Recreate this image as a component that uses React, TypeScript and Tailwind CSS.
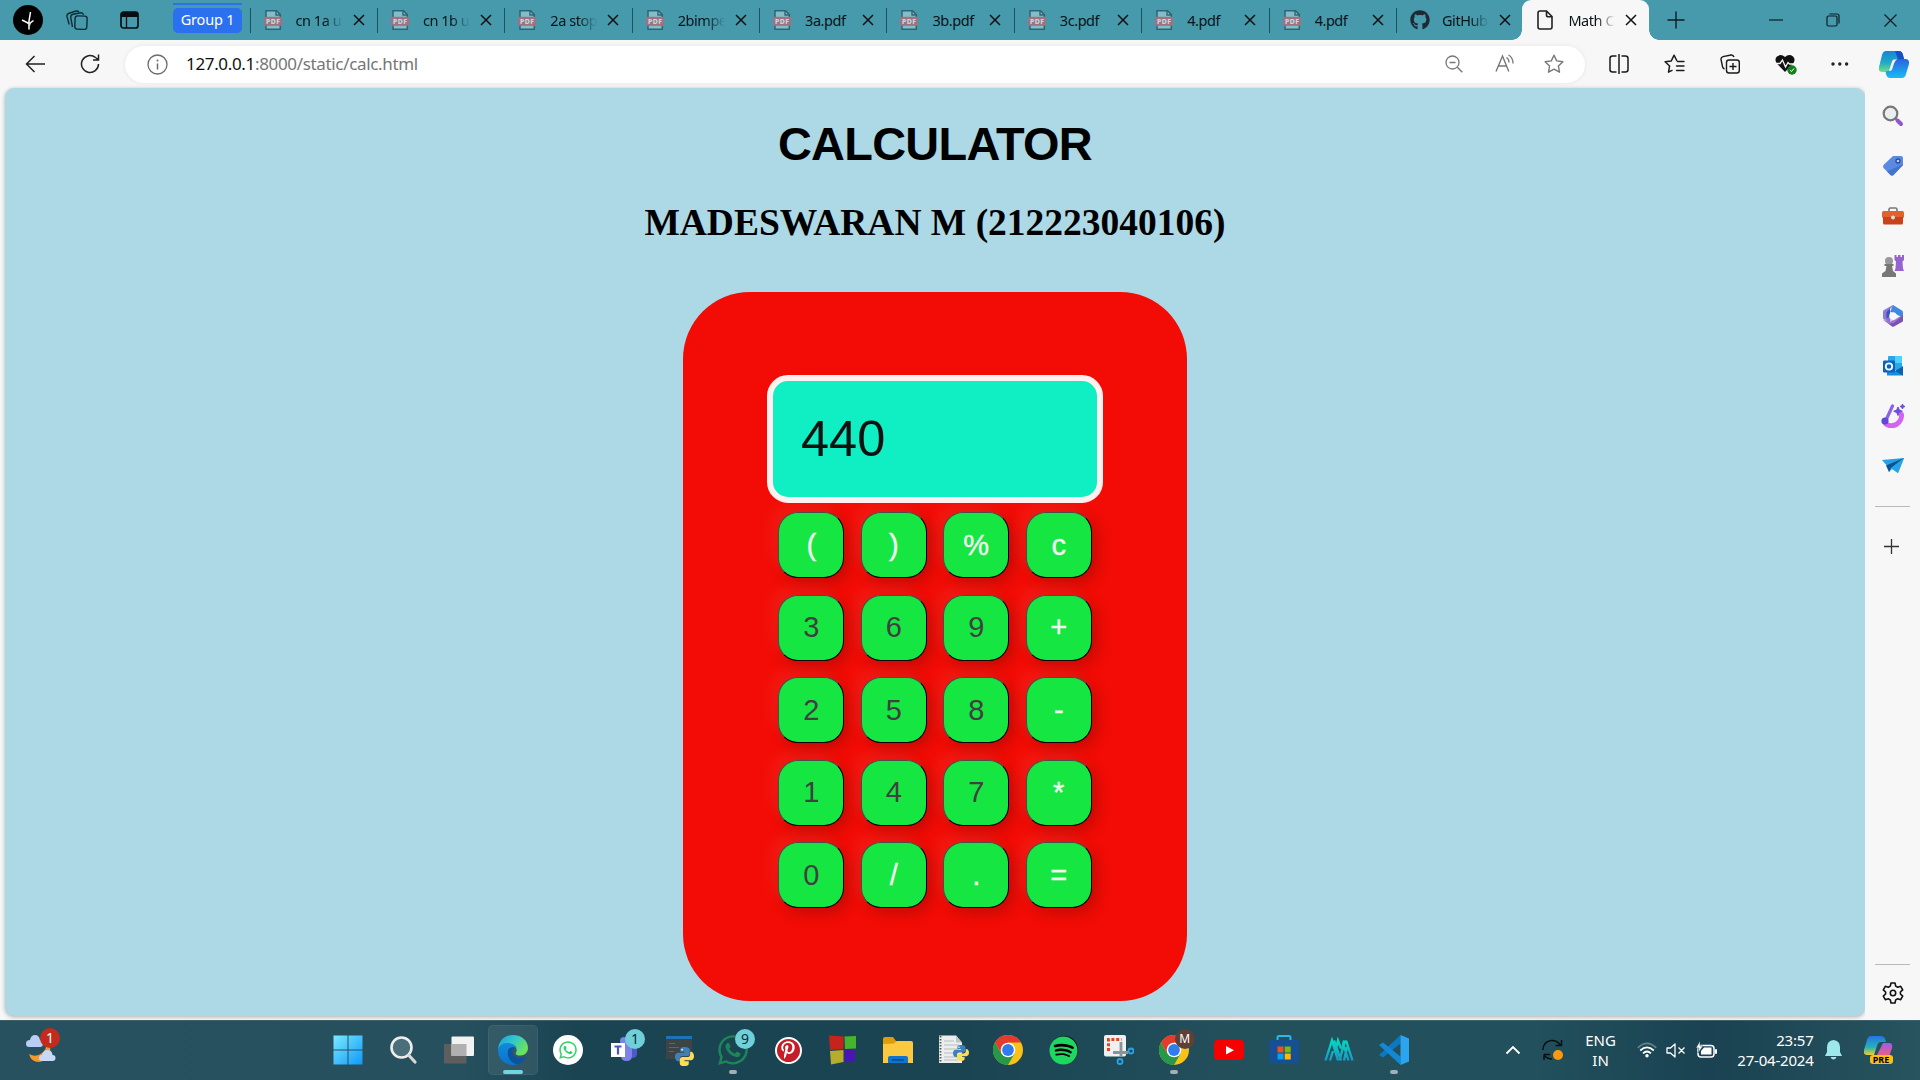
import React from "react";
import { FaGithub, FaWhatsapp, FaPinterestP, FaSpotify } from "react-icons/fa";

type P = { children?: React.ReactNode };

const Svg = ({ w, h, vb, className = "", children }: P & { w: number; h: number; vb?: string; className?: string }) => (
  <svg width={w} height={h} viewBox={vb ?? `0 0 ${w} ${h}`} fill="none" className={`shrink-0 ${className}`}>
    {children}
  </svg>
);

/* ---------- Tab strip ---------- */

const PdfIcon = () => (
  <Svg w={18} h={20}>
    <path d="M2 .8h10.5L16.3 4.6V19.2H2z" fill="#86bcc8" stroke="#2c6674" strokeWidth="1.5" />
    <path d="M12 1v4h4.5" stroke="#2c6674" strokeWidth="1.4" />
    <rect x="0" y="6.8" width="18" height="9" fill="#a0727f" />
    <text x="9" y="14" textAnchor="middle" fontSize="7" fontWeight="800" fontFamily="Noto Sans, sans-serif" fill="#b9dbe2" textLength="14">PDF</text>
  </Svg>
);

const CloseX = () => (
  <Svg w={12} h={12}>
    <path d="M1 1l10 10M11 1L1 11" stroke="#111" strokeWidth="1.5" />
  </Svg>
);

const tabs = [
  { label: "cn 1a u", fade: true },
  { label: "cn 1b u", fade: true },
  { label: "2a stop", fade: true },
  { label: "2bimpe", fade: true },
  { label: "3a.pdf" },
  { label: "3b.pdf" },
  { label: "3c.pdf" },
  { label: "4.pdf" },
  { label: "4.pdf" },
  { label: "GitHub", fade: true, git: true },
];

const Label = ({ text, fade }: { text: string; fade?: boolean }) => (
  <span
    className={`w-[47px] overflow-hidden whitespace-nowrap text-[14.5px] leading-5 tracking-[-0.45px] text-[#0a1417] ${
      fade ? "[mask-image:linear-gradient(90deg,#000_60%,transparent_100%)]" : ""
    }`}
  >
    {text}
  </span>
);

const TabStrip = () => (
  <div className="flex h-10 items-center bg-[#469aac]">
    <div className="ml-[13px] flex size-[30px] shrink-0 items-center justify-center rounded-full bg-black">
      <Svg w={14} h={20}>
        <path d="M8 19.500V11M8 13.500L1 10M8 14L12.500 10.500M8 11L9.500 2" stroke="#fff" strokeWidth="1.500" />
        <path d="M3 10.500l5 3 3-3-2 5.500z" fill="#ddd" />
      </Svg>
    </div>
    <Svg w={22} h={20} className="ml-[23px]">
      <rect x="9" y="6" width="12" height="13.300" rx="2.500" transform="rotate(2 15 12)" stroke="#0d2c34" strokeWidth="1.400" />
      <path d="M6.500 17L4.700 7.500Q4.500 5 6.800 4.300L15 2.800q2-.200 2.500 2" stroke="#0d2c34" strokeWidth="1.400" />
      <path d="M3.200 14.500L1 6.500Q.5 4.500 2.500 3.500L10 1q2-.300 3 1" stroke="#0d2c34" strokeWidth="1.400" />
    </Svg>
    <Svg w={19} h={18} className="ml-8">
      <rect x="1" y="1" width="17" height="16" rx="2.500" stroke="#050f12" strokeWidth="1.700" />
      <path d="M1 2.500Q1 1 3 1h13q2 0 2 2v3H1z" fill="#050f12" />
      <path d="M6.500 5v12" stroke="#050f12" strokeWidth="1.300" />
    </Svg>
    <div className="ml-[34px] flex w-[69px] shrink-0 flex-col gap-[3px] self-start pt-[3px]">
      <div className="h-0.5 bg-[#2b70ee]" />
      <div className="flex h-[24.500px] items-center justify-center whitespace-nowrap rounded-[5px] bg-[#2b70ee] text-[14.500px] tracking-[-0.200px] text-white">Group 1</div>
    </div>
    <div className="ml-[7.500px] flex">
      {tabs.map((t, i) => (
        <div key={i} className="flex w-[127.400px] items-center">
          <div className="h-[25px] w-px bg-[#1d5361]" />
          <div className="ml-[13px] flex w-5 items-center">{t.git ? <FaGithub size={20} color="#1c2a33" /> : <PdfIcon />}</div>
          <div className="ml-3 flex"><Label text={t.label} fade={t.fade} /></div>
          <div className="ml-2.5"><CloseX /></div>
        </div>
      ))}
    </div>
    <div className="relative -ml-px flex h-10 w-[127px] shrink-0 items-center rounded-t-[9px] bg-[#f7f7f7]">
      <div className="absolute -left-2.5 bottom-0 size-2.5 bg-[radial-gradient(circle_at_0_0,transparent_9.500px,#f7f7f7_10px)]" />
      <div className="absolute -right-2.5 bottom-0 size-2.5 bg-[radial-gradient(circle_at_100%_0,transparent_9.500px,#f7f7f7_10px)]" />
      <Svg w={16} h={20} className="ml-[15px]">
        <path d="M3 1h6.500L15 6.500V17q0 2-2 2H3q-2 0-2-2V3q0-2 2-2zM9.500 1v4q0 1.800 1.800 1.800H15" stroke="#222" strokeWidth="1.600" />
      </Svg>
      <div className="ml-[15px] flex"><Label text="Math C" fade /></div>
      <div className="ml-2.5"><CloseX /></div>
    </div>
    <Svg w={18} h={18} className="ml-[18px]"><path d="M9 .5v17M.5 9h17" stroke="#0b1e24" strokeWidth="1.400" /></Svg>
    <Svg w={14} h={2} className="ml-[84px]"><path d="M0 1h14" stroke="#0b1e24" strokeWidth="1.200" /></Svg>
    <Svg w={14} h={14} className="ml-[43px]">
      <rect x="1" y="3" width="10" height="10" rx="1.500" stroke="#0b1e24" strokeWidth="1.200" />
      <path d="M3.500 1H11q2 0 2 2v7.500" stroke="#0b1e24" strokeWidth="1.200" />
    </Svg>
    <Svg w={13} h={13} className="ml-11"><path d="M.5.5l12 12M12.500.5l-12 12" stroke="#0b1e24" strokeWidth="1.200" /></Svg>
  </div>
);

/* ---------- Toolbar ---------- */

const starPath = "M10 1.200l2.700 5.700 6.200.8-4.500 4.300 1.100 6.200L10 15.200l-5.500 3 1.100-6.200L1.100 7.700l6.200-.8z";

const CopilotMark = () => (
  <Svg w={30} h={27}>
    <defs>
      <linearGradient id="cpA" x1="0" y1="0" x2="0" y2="1"><stop offset="0" stopColor="#1686d8" /><stop offset=".55" stopColor="#22a9c4" /><stop offset="1" stopColor="#6fe08b" /></linearGradient>
      <linearGradient id="cpB" x1="0" y1="0" x2="0" y2="1"><stop offset="0" stopColor="#2b63e0" /><stop offset="1" stopColor="#17bdf5" /></linearGradient>
    </defs>
    <path d="M7 0h13q3 0 4 4l1 4h-6q-3 0-4 3l-3 8q-1 2-4 2H3q-4 0-3-5L3 4q1-4 4-4z" fill="url(#cpA)" />
    <path d="M23 27H11q-3 0-4-4l-.5-3q3 1 5-2l3-8q1-2 4-2h8q4 0 3.500 5l-3 10q-1 4-4 4z" fill="url(#cpB)" />
    <path d="M14.500 8.500h3.500q-2 1-3 4l-2 6q-.7 1.500-3 1.500l2.500-8q.7-3 2-3.500z" fill="#f7f7f7" />
    <path d="M16 0h4q3 0 4 4l1 4h-6z" fill="#174fc4" />
  </Svg>
);

const Toolbar = () => (
  <div className="flex h-12 items-center bg-[#f7f7f7]">
    <Svg w={20} h={18} className="ml-[25px]"><path d="M20 9H1.500M9.500 1L1.500 9l8 8" stroke="#222" strokeWidth="1.500" /></Svg>
    <Svg w={20} h={20} className="ml-[35px]">
      <path d="M18.500 10a8.500 8.500 0 1 1-3-6.500L18 5.500M18.500 0.500V6h-5.500" stroke="#222" strokeWidth="1.500" />
    </Svg>
    <div className="ml-[25px] flex h-[37px] w-[1460px] shrink-0 items-center rounded-full bg-white shadow-[0_0_4px_rgba(0,0,0,0.08)]">
      <Svg w={21} h={21} className="ml-[22px]">
        <circle cx="10.500" cy="10.500" r="9.500" stroke="#6b6b6b" strokeWidth="1.300" />
        <path d="M10.500 9.500v6" stroke="#6b6b6b" strokeWidth="1.500" /><circle cx="10.500" cy="6.400" r="1" fill="#6b6b6b" />
      </Svg>
      <div className="ml-[18px] w-[400px] whitespace-nowrap text-[17px] tracking-[-0.340px] text-[#767676]"><span className="text-[#111]">127.0.0.1</span>:8000/static/calc.html</div>
      <Svg w={18} h={18} className="ml-auto"><circle cx="7.500" cy="7.500" r="6.500" stroke="#777" strokeWidth="1.300" /><path d="M4.500 7.500h6M12.300 12.300l5 5" stroke="#777" strokeWidth="1.400" /></Svg>
      <Svg w={20} h={20} className="ml-8">
        <path d="M1 17.500L7.500 2l6.300 15.500M3.500 12h8" stroke="#777" strokeWidth="1.400" />
        <path d="M11.500 3.500q2.500 1.500 2.500 5M13.500 1q4.500 2.500 4.500 8.500" stroke="#777" strokeWidth="1.300" />
      </Svg>
      <Svg w={20} h={20} className="ml-[29px] mr-[21px]"><path d={starPath} stroke="#777" strokeWidth="1.400" strokeLinejoin="round" /></Svg>
    </div>
    <Svg w={20} h={20} className="ml-[24px]">
      <path d="M7.500 2H3.500Q1 2 1 4.500v11Q1 18 3.500 18h4M12.500 2h4Q19 2 19 4.500v11q0 2.500-2.500 2.500h-4M10 0v20" stroke="#1a1a1a" strokeWidth="1.500" />
    </Svg>
    <Svg w={21} h={20} className="ml-[35px]">
      <path d="M13 7L10 1.200 7.300 6.900l-6.200.8 4.500 4.300-1.100 6.200 4-2" stroke="#1a1a1a" strokeWidth="1.500" strokeLinejoin="round" />
      <path d="M13.500 7.500H20M12.500 12H20M12.500 16.500H20" stroke="#1a1a1a" strokeWidth="1.400" strokeLinecap="round" />
    </Svg>
    <Svg w={20} h={20} className="ml-[35px]">
      <rect x="6.500" y="6" width="12.800" height="13" rx="2.500" stroke="#1a1a1a" strokeWidth="1.400" />
      <path d="M13 9v7M9.500 12.500h7M4.500 15Q3 14.500 2.500 12.500L1 5.500Q.8 3.300 3 2.600L11 1q2.200-.3 3 2" stroke="#1a1a1a" strokeWidth="1.400" />
    </Svg>
    <Svg w={22} h={21} className="ml-[35px]">
      <path d="M10 18L1.800 9.500Q-1 5.500 2 2.500 6-.5 10 3q4-3.500 8-.5 3 3 .2 7z" fill="#111" />
      <path d="M0 9.500h5L7.500 6l3 7L13 8.500l1.500 1.500H20" stroke="#f7f7f7" strokeWidth="1.300" />
      <circle cx="17" cy="16" r="4.700" fill="#13801c" /><path d="M15 16l1.500 1.500 2.500-3" stroke="#fff" />
    </Svg>
    <Svg w={18} h={4} className="ml-[34px]"><circle cx="2" cy="2" r="1.700" fill="#222" /><circle cx="8.800" cy="2" r="1.700" fill="#222" /><circle cx="15.600" cy="2" r="1.700" fill="#222" /></Svg>
    <div className="ml-[30px]"><CopilotMark /></div>
  </div>
);

/* ---------- Page ---------- */

const keys = ["(", ")", "%", "c", "3", "6", "9", "+", "2", "5", "8", "-", "1", "4", "7", "*", "0", "/", ".", "="];

const CalculatorPage = () => (
  <main className="ml-[5px] flex h-[928px] w-[1860px] shrink-0 flex-col items-center rounded-[9px] bg-[#add8e6] shadow-[0_1px_4px_rgba(0,0,0,0.3)]">
    <h1 className="mt-[29px] font-['Liberation_Sans',Arial,sans-serif] text-[46.875px] font-bold leading-[54px] tracking-[-0.700px] text-black">CALCULATOR</h1>
    <h2 className="mt-[31px] font-['Liberation_Serif',serif] text-[37.500px] font-bold leading-[42px] text-black">MADESWARAN M (212223040106)</h2>
    <section className="mt-[48px] flex h-[709px] w-[504px] flex-col items-center rounded-[67px] bg-[#f20c05] pt-[83px] font-['Liberation_Sans',Arial,sans-serif]">
      <div className="flex h-[128px] w-[336px] items-center rounded-[21px] border-[6px] border-[#fff0f0] bg-[#10efc4] pl-7 text-[50.500px] text-[#111]">440</div>
      <div className="mt-[9px] grid grid-cols-[repeat(4,66px)] gap-[16.500px]">
        {keys.map((k) => (
          <button
            key={k}
            className={`flex size-[66px] items-center justify-center rounded-[20px] border border-t-[#4c4c4c] border-l-[#4c4c4c] border-r-black border-b-black bg-[#16e642] text-[29px] leading-none shadow-[-7px_-7px_15px_rgba(255,255,255,0.07),5px_5px_15px_rgba(0,0,0,0.2)] ${
              /\d/.test(k) ? "text-[#404040]" : "text-[#f1f5f1] [-webkit-text-stroke:0.4px_#f1f5f1]"
            }`}
          >
            {k}
          </button>
        ))}
      </div>
    </section>
  </main>
);

/* ---------- Sidebar ---------- */

const sideIcons = [
  <Svg w={22} h={22} key="s"><circle cx="8.500" cy="8.500" r="6.800" stroke="#777" strokeWidth="2.200" fill="#e9eef2" /><path d="M13.500 13.500l2 2" stroke="#777" strokeWidth="2" /><path d="M15.500 15.500l3.500 3.500" stroke="#9156cf" strokeWidth="4" strokeLinecap="round" /></Svg>,
  <Svg w={22} h={22} key="t"><path d="M11 1h8q2 0 2 2v7L11.500 20q-1.500 1-3 0L1.500 13q-1-1.500 0-3z" fill="#5b8be0" /><path d="M21 9v1l-9.500 10q-1.500 1-3 0L5 16.500z" fill="#4573d0" /><circle cx="16" cy="6" r="2" fill="#b7cff5" stroke="#2a4b9c" strokeWidth="1.300" /></Svg>,
  <Svg w={22} h={22} key="b"><path d="M7 7V4.500Q7 3 8.500 3h5Q15 3 15 4.500V7" stroke="#777" strokeWidth="1.600" /><rect x="0" y="6" width="22" height="7" rx="1.500" fill="#e2622d" /><path d="M1 12h20v6q0 1.500-1.500 1.500h-17Q1 19.500 1 18z" fill="#c8421a" /><circle cx="11" cy="12.500" r="2" fill="#ddd" /></Svg>,
  <Svg w={22} h={22} key="g"><path d="M12.500 0h2v2H16V0h2.500v2H20V0h2v5l-1.500 1.500.5 7 1 2.500h-9.500l1-2.500.5-7L12.500 5z" fill="#9663cf" /><circle cx="7" cy="6" r="4" fill="#999" /><path d="M2.500 9h9v2H10l1 5 3 2.500V22H0v-3.500L3.500 16l1-5h-2z" fill="#777" /></Svg>,
  <Svg w={22} h={22} key="m"><path d="M11 0l9 5.500q1 .5 1 2V13L13 8.500 8 7z" fill="#3f8ae0" /><path d="M10 .5Q11 0 12 .5L8 4v12l-6-1.500Q1 14 1 13V6.500Q1 5.500 2 5z" fill="#8f7ad8" /><path d="M8 3.500L4.500 7v9L8 17.500z" fill="#3a55b5" /><path d="M1.500 15L8 17l5.500-2.500L21 10v5.500q0 1-1 1.500l-8 4.500q-1 .5-2 0z" fill="#7a52b0" /><path d="M1.500 15L9 11l1 4 11-5-9 8-5 1z" fill="#b488e0" opacity=".6" /><circle cx="11" cy="11" r="3.800" fill="#f7f7f7" /></Svg>,
  <Svg w={22} h={22} key="o"><rect x="6" y="1" width="14" height="14" rx="1" fill="#28a8ea" /><path d="M13 1h7v7h-7z" fill="#50d0ff" /><path d="M5 11l8 5 8-5v9.500H5z" fill="#168fdb" /><path d="M13 16l8-4.500v9z" fill="#0b60b0" /><rect x="1" y="5.500" width="12" height="12" rx="1.200" fill="#0a63c0" /><circle cx="7" cy="11.500" r="3.200" stroke="#fff" strokeWidth="1.800" /></Svg>,
  <Svg w={24} h={24} key="d"><path d="M5 20q5 3.500 11 0 5-4 4.500-9.500" stroke="#d464f0" strokeWidth="5" strokeLinecap="round" /><path d="M5.500 15L11.500 2" stroke="#8b63e6" strokeWidth="3.200" strokeLinecap="round" /><circle cx="4" cy="17" r="3.600" fill="#6049d8" /><path d="M17 3l1.300 3 3 1.300-3 1.300L17 11.500l-1.300-3-3-1.200 3-1.300zM21.500 0l.7 1.700 1.800.8-1.800.8-.7 1.700-.7-1.700-1.800-.8 1.800-.8z" fill="#704be0" stroke="#704be0" /></Svg>,
  <Svg w={22} h={22} key="p"><path d="M0 5l22-2-6 15-6-4-3 3-1-5z" fill="#27a0e6" /><path d="M22 3L4 10.500 7 17l2-4z" fill="#0a5495" /><path d="M22 3l-6 15-7-5z" fill="#25a5e8" /></Svg>,
];

const Sidebar = () => (
  <aside className="flex w-[55px] flex-col items-center bg-[#f7f7f7] pt-[3px]">
    {sideIcons.map((ic, i) => (
      <div key={i} className="flex h-[50px] shrink-0 items-center justify-center">{ic}</div>
    ))}
    <div className="mt-[15px] h-px w-[35px] bg-[#b9b9b9]" />
    <Svg w={15} h={15} className="mt-8 -translate-x-px"><path d="M7.500 0v15M0 7.500h15" stroke="#333" strokeWidth="1.300" /></Svg>
    <div className="mt-auto h-px w-[35px] bg-[#b9b9b9]" />
    <Svg w={22} h={22} className="mb-4 mt-[17px]">
      <path d="M9 1h4l.7 3.100 2 1.100 3-.9 2 3.500L18.400 10v2l2.300 2.200-2 3.500-3-.9-2 1.100L13 21H9l-.7-3.100-2-1.100-3 .9-2-3.500L3.600 12v-2L1.300 7.800l2-3.500 3 .9 2-1.100z" stroke="#111" strokeWidth="1.600" strokeLinejoin="round" />
      <circle cx="11" cy="11" r="2.700" stroke="#111" strokeWidth="1.600" />
    </Svg>
  </aside>
);

/* ---------- Taskbar ---------- */

const Chrome = () => (
  <Svg w={30} h={30}>
    <circle cx="15" cy="15" r="15" fill="#fbc116" />
    <path d="M2 7.500a15 15 0 0 0 13 22.500l6.500-11.250L15 15l-6.500 3.750z" fill="#24994a" />
    <path d="M2 7.500L8.500 18.750 15 15V7.500h13A15 15 0 0 0 2 7.500z" fill="#e33b2e" />
    <circle cx="15" cy="15" r="7.300" fill="#fff" /><circle cx="15" cy="15" r="5.900" fill="#2f7cee" />
  </Svg>
);

const Python = ({ s = 19 }: { s?: number }) => (
  <Svg w={s} h={s} vb="0 0 20 20">
    <path d="M10 0C6 0 5.500 1.500 5.500 3v2H10v1H3.500C1 6 0 8 0 10.500S1.500 15 3.500 15H5v-2.500C5 10.500 6.500 9.500 8 9.500h5c1.500 0 2.500-1 2.500-2.500V3c0-2-2-3-5.500-3z" fill="#4080b8" />
    <path d="M10 20c4 0 4.500-1.500 4.500-3v-2H10v-1h6.500c2.500 0 3.500-2 3.500-4.500S18.500 5 16.500 5H16v2.500c0 2-1.500 3-3 3H8C6.500 10.500 5 11.500 5 13v4c0 2 1.500 3 5 3z" fill="#ffdc55" />
    <circle cx="7.500" cy="2.800" r=".9" fill="#fff" />
  </Svg>
);

const Badge = ({ children, className }: P & { className: string }) => (
  <div className={`absolute flex size-5 items-center justify-center rounded-full leading-none ${className}`}>{children}</div>
);

const Task = ({ children, active, running }: P & { active?: boolean; running?: boolean }) => (
  <div className="relative flex h-[60px] w-[55.080px] shrink-0 items-center justify-center">
    {active && <div className="absolute inset-x-[2.500px] inset-y-[5px] rounded-[5px] border border-white/5 bg-white/8" />}
    <div className="relative flex size-[30px] items-center justify-center">{children}</div>
    {active && <div className="absolute bottom-1.5 h-1 w-5 rounded-full bg-[#70d5dc]" />}
    {running && <div className="absolute bottom-1.5 h-1 w-2 rounded-full bg-[#9fb0b6]" />}
  </div>
);

const Taskbar = () => (
  <footer className="flex h-[60px] items-center bg-[linear-gradient(90deg,#27515e_0%,#26505d_24%,#1b4453_30%,#1b4453_50%,#22505b_65%,#22505c_80%,#1a4252_89%,#27545e_100%)] text-white shadow-[inset_0_1px_0_#3c6269]">
    <div className="relative ml-[25px] h-10 w-10">
      <Svg w={40} h={40}>
        <path d="M25 16q2 14-11 16Q6 32 4 24q7 4 13-1 4-3 4-7z" fill="#f59a24" />
        <path d="M4 17q-3 0-3-3.500T5 10q1-5 5-5t5 5q3 0 3 3.500T15 17z" fill="#b9cdf5" />
        <path d="M17 31q-3 0-3-3t3-3q1-5 5.500-5t5 5q3 0 3 3t-3 3z" fill="#c8d8f8" />
      </Svg>
      <Badge className="-top-[2px] left-[15px] bg-[#c42b1c] text-[14px] text-white">1</Badge>
    </div>
    <div className="ml-[255px] flex">
      <Task>
        <Svg w={30} h={30}>
          <defs><linearGradient id="win" x1="0" y1="0" x2="30" y2="30" gradientUnits="userSpaceOnUse"><stop stopColor="#7cecff" /><stop offset="1" stopColor="#0c97fa" /></linearGradient></defs>
          <path d="M.5.5h14v14H.5zM15.500.5h14v14h-14zM.5 15.500h14v14H.5zM15.500 15.500h14v14h-14z" fill="url(#win)" />
        </Svg>
      </Task>
      <Task><Svg w={30} h={30}><circle cx="13.500" cy="12.500" r="10" fill="#4a6f7a" stroke="#eee" strokeWidth="2.600" /><path d="M21 20.500l6 6.500" stroke="#d8d8d8" strokeWidth="3.200" strokeLinecap="round" /></Svg></Task>
      <Task>
        <Svg w={30} h={30} className="translate-x-px"><rect x="0" y="9" width="22.500" height="19.500" rx="1" fill="#5e5e5e" /><rect x="7.500" y="1.500" width="22.500" height="19.500" rx="1" fill="#f2f2f2" /><rect x="7.500" y="9" width="15" height="12" fill="#b0b0b0" /></Svg>
      </Task>
      <Task active>
        <Svg w={30} h={30}>
          <defs>
            <linearGradient id="eT" x1="0" y1="0" x2="1" y2=".5"><stop stopColor="#1b9fe0" /><stop offset=".5" stopColor="#2fc6cf" /><stop offset="1" stopColor="#6be35a" /></linearGradient>
            <linearGradient id="eB" x1="0" y1="0" x2="0" y2="1"><stop stopColor="#128ad8" /><stop offset="1" stopColor="#0a73cd" /></linearGradient>
          </defs>
          <path d="M0 14C1 5 7 0 15 0c9 0 15 6 15 13 0 4.500-3.500 7.500-7.500 7.500-4 0-5.500-1.500-4.500-3 2-4-1-8-6-8-6 0-10 2-12 4.500z" fill="url(#eT)" />
          <path d="M0 15c0-3.500 4-7 9.500-7 4.500 0 8 2 9 5-4.500-2.500-8 0-8 5 0 7 6 11.500 10.500 10.500-2 1-4 1.500-6 1.500C6 30 0 23.500 0 15z" fill="url(#eB)" />
          <path d="M10.500 14c-2.500 7 2 15 9.500 15 3-1 6-3 7.700-6.500-.2-.9-.9-.7-1.500-.4-5 2-10 .5-11.500-3-1-2.300-.3-4.800 1.300-6.100-2-.6-4-.2-5.500 1z" fill="#0c539f" />
        </Svg>
      </Task>
      <Task><div className="flex size-[30px] items-center justify-center rounded-full bg-white"><FaWhatsapp size={20} color="#2ad366" /></div></Task>
      <Task>
        <Svg w={30} h={30}>
          <circle cx="16" cy="6" r="4" fill="#7b83eb" />
          <path d="M20 10h9v9q0 4-5 4h-4z" fill="#5059c9" /><path d="M13 9h11v12q0 5-5.500 5T13 21z" fill="#7b83eb" />
          <rect x="3" y="8" width="14" height="14" fill="#fff" /><path d="M6.500 11.500h7M10 11.500v8" stroke="#4e56bd" strokeWidth="2.200" />
        </Svg>
        <Badge className="-right-[7px] -top-1.5 bg-[#70d0da] text-[14px] text-[#0c2c33]">1</Badge>
      </Task>
      <Task>
        <Svg w={30} h={30}><rect x="3" y="1" width="26" height="23" fill="#3d4446" /><rect x="3" y="1" width="26" height="3" fill="#1b73ba" /><path d="M6 8.500h6M6 12.500h10M6 16.500h5" stroke="#3e7b4b" strokeWidth="1.200" /></Svg>
        <div className="absolute -bottom-px -right-px"><Python s={19} /></div>
      </Task>
      <Task running>
        <FaWhatsapp size={34} color="#1d8659" className="shrink-0" />
        <Badge className="-right-[7px] -top-1.5 bg-[#70d0da] text-[14px] text-[#0c2c33]">9</Badge>
      </Task>
      <Task><div className="flex size-[27px] items-center justify-center rounded-full border-2 border-white bg-[#c41e28]"><FaPinterestP size={18} color="#fff" /></div></Task>
      <Task>
        <Svg w={30} h={30}><path d="M1 .5l14.500 1V14L2 15z" fill="#c5231c" /><path d="M16.500 1.500L28 1v12.500l-11 .5z" fill="#46b52c" /><path d="M2 16l13.500-1v12L3 29.500z" fill="#b5ad2b" /><path d="M16.500 15L27 14.500V26l-10.500 1.500z" fill="#4915b5" /></Svg>
      </Task>
      <Task>
        <Svg w={30} h={30}><path d="M0 4q0-2 2-2h8l3 4v5H0z" fill="#dd9c08" /><path d="M0 9l11-.5L13.500 6H28q2 0 2 2v20H0z" fill="#fbc93f" /><path d="M5 28v-5q0-2 2-2h16q2 0 2 2v5z" fill="#0f74cf" /><path d="M9 25h12" stroke="#0a4c94" strokeWidth="1.600" /></Svg>
      </Task>
      <Task>
        <Svg w={30} h={30}><path d="M1 .5h17l6 7V28H1z" fill="#eceeee" /><path d="M18 .5v7h6z" fill="#bfc4c4" /><path d="M2.500 1v27" stroke="#555" strokeWidth="1.800" strokeDasharray="1.500 1.500" /><path d="M6 6h10M6 10h15M6 14h15M6 18h12M6 22h14M6 25h14" stroke="#b9bdbd" /></Svg>
        <div className="absolute bottom-1 -right-px"><Python s={16} /></div>
      </Task>
      <Task><Chrome /></Task>
      <Task><div className="flex size-7 items-center justify-center rounded-full bg-black"><FaSpotify size={29} color="#1ed760" className="shrink-0" /></div></Task>
      <Task>
        <Svg w={30} h={30}><rect x="0" y="0" width="22" height="21.500" rx="2" fill="#eef0f1" /><path d="M4.500 16V4.500h13" stroke="#e0451f" strokeWidth="3" strokeDasharray="3 1.800" /><path d="M17 7v15M9 17.500h15" stroke="#8c9396" strokeWidth="2.800" /><circle cx="27" cy="16" r="2.500" stroke="#2aa3e6" strokeWidth="1.800" /><circle cx="16" cy="26.500" r="2.500" stroke="#2aa3e6" strokeWidth="1.800" /></Svg>
      </Task>
      <Task running>
        <Chrome />
        <Badge className="-right-[6px] -top-1.5 bg-[#5d4037] text-[12px] text-white">M</Badge>
      </Task>
      <Task><Svg w={30} h={30}><rect x="0" y="5" width="30" height="20" rx="4" fill="#f60000" /><path d="M12 11l8 4.300-8 4.300z" fill="#fff" /></Svg></Task>
      <Task>
        <Svg w={30} h={30}><path d="M8.500 6V2.500Q8.500 1 10 1h10q1.500 0 1.500 1.500V6" stroke="#29b8ee" strokeWidth="2" /><path d="M0 5h30v20q0 4-4 4H4q-4 0-4-4z" fill="#164f92" /><path d="M8.500 11.500h6v6h-6z" fill="#f25022" /><path d="M15.700 11.500h6v6h-6z" fill="#7fba00" /><path d="M8.500 18.500h6v6h-6z" fill="#00a4ef" /><path d="M15.700 18.500h6v6h-6z" fill="#ffb900" /></Svg>
      </Task>
      <Task>
        <Svg w={30} h={30}>
          <defs><linearGradient id="mm" x1="0" y1="4" x2="0" y2="26" gradientUnits="userSpaceOnUse"><stop stopColor="#00dfc0" /><stop offset="1" stopColor="#1d93c4" /></linearGradient></defs>
          <path d="M1.500 25.500L8 5.500l6 20M6 25.500L9 16M10 5.500l7 20M15.500 25.500L21 5.500M12 14L14 5.500l3 8M18 16L20 5.500M20 25.500L23 12M22 5.500l6.500 20M19.500 10l5 15.500" stroke="url(#mm)" strokeWidth="2.400" />
        </Svg>
      </Task>
      <Task running>
        <Svg w={30} h={30}><path d="M21.500 0v8.500L4 22.500 0 20 21.500 0z" fill="#0b78c4" /><path d="M21.500 30v-8.500L4 7.500 0 10l21.500 20z" fill="#1389d6" /><path d="M21.500 0L30 3.500v23L21.500 30z" fill="#2ca5f0" /></Svg>
      </Task>
    </div>
    <Svg w={16} h={10} className="ml-[83px]"><path d="M1.500 8.500L8 2l6.500 6.500" stroke="#fff" strokeWidth="1.900" /></Svg>
    <Svg w={22} h={22} className="ml-[21px]">
      <path d="M1 11Q1 3 9 1.500q6-.5 10 5M19.500 1v5.500h-6M2 15.500h6M2 15.500V21M2 16q3 4 8 4" stroke="#0a0f10" strokeWidth="1.400" />
      <circle cx="16" cy="16" r="5" fill="#ff9811" />
    </Svg>
    <div className="ml-[21px] w-[32px] text-center text-[15px] leading-[20px]">ENG IN</div>
    <Svg w={20} h={16} className="ml-[20px]">
      <path d="M.8 5.800Q10-3 19.200 5.800" stroke="#5f858d" strokeWidth="1.700" /><path d="M3.200 8.500q6.800-6.200 13.600 0M6 11.300q4-3.600 8 0" stroke="#fff" strokeWidth="1.700" /><circle cx="10" cy="13.800" r="1.700" fill="#fff" />
    </Svg>
    <Svg w={20} h={15} className="ml-[9px]"><path d="M1 5h3.500L9 1v13l-4.500-4H1zM12.500 4.500l6 6M18.500 4.500l-6 6" stroke="#fff" strokeWidth="1.300" strokeLinejoin="round" /></Svg>
    <Svg w={22} h={18} className="ml-[10px]"><rect x="2" y="4.500" width="16" height="11.500" rx="3" stroke="#fff" strokeWidth="1.500" /><path d="M5 13.500V10l3-3.500h7.500v7z" fill="#fff" /><rect x="19" y="8" width="2" height="5" rx="1" fill="#fff" /><path d="M4 0L0 7h3l-1 5 5-7H4z" fill="#fff" stroke="#1a4252" strokeWidth=".5" /></Svg>
    <div className="ml-3 w-[84px] whitespace-nowrap text-right text-[15px] leading-[20px] tracking-[-0.200px]">23:57<br />27-04-2024</div>
    <Svg w={17} h={20} className="ml-[11px]"><path d="M8.500 0Q15 1 15 7v5l2 4H0l2-4V7q0-6 6.500-7zM5.500 17h6q-1 2.500-3 2.500t-3-2.500z" fill="#9de8ec" /></Svg>
    <div className="relative ml-[22px] h-7 w-[30px]">
      <Svg w={29} h={24}>
        <defs>
          <linearGradient id="pA" x1="0" y1="0" x2="0" y2="1"><stop stopColor="#2474e6" /><stop offset=".6" stopColor="#27b3b5" /><stop offset="1" stopColor="#f5cd2b" /></linearGradient>
          <linearGradient id="pB" x1="0" y1="0" x2="0" y2="1"><stop stopColor="#a35af0" /><stop offset="1" stopColor="#f2616e" /></linearGradient>
        </defs>
        <path d="M7 0h10q4 0 5 6h-5q-3 0-4 4l-3 9H3q-4 0-3-5L3 4q1-4 4-4z" fill="url(#pA)" />
        <path d="M19 7h6q4 0 3 5l-3 9H12z" fill="url(#pB)" />
      </Svg>
      <div className="absolute left-[6px] top-[19px] flex h-[9px] w-[23px] items-center justify-center rounded-[3px] bg-[#fcbf13] text-[9px] font-bold leading-none text-black">PRE</div>
    </div>
  </footer>
);

export default function App() {
  return (
    <div className="flex h-[1080px] w-[1920px] flex-col overflow-hidden bg-[#f7f7f7] font-['Noto_Sans','Open_Sans',sans-serif]">
      <TabStrip />
      <Toolbar />
      <div className="flex h-[932px]">
        <CalculatorPage />
        <Sidebar />
      </div>
      <Taskbar />
    </div>
  );
}
